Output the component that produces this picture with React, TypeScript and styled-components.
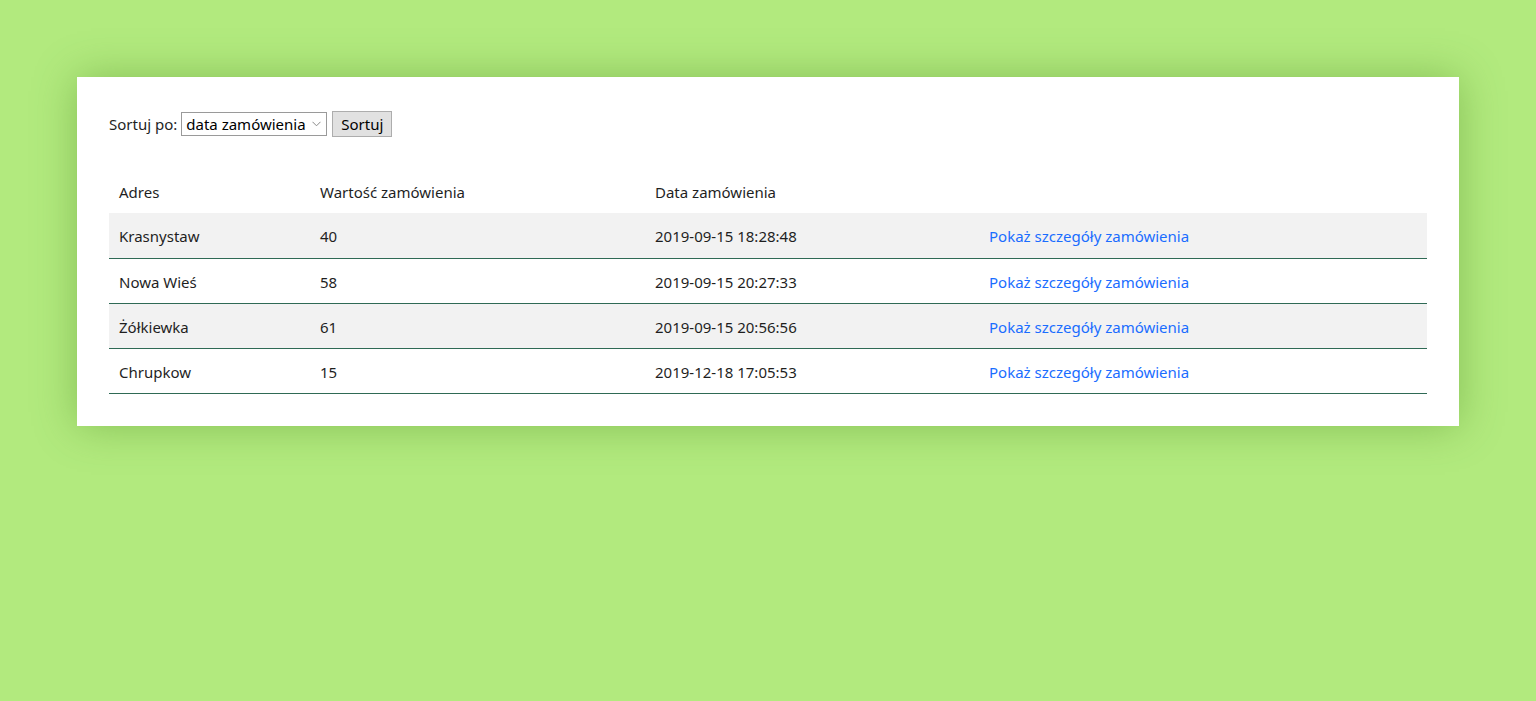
import React from "react";
import styled, { createGlobalStyle } from "styled-components";

const Global = createGlobalStyle`
  html, body { margin: 0; padding: 0; }
  body {
    background: #b2ea7e;
    font-family: "Noto Sans", "Open Sans", sans-serif;
    font-size: 15px;
    color: #1f1f1f;
    min-height: 701px;
  }
`;

const Page = styled.div`
  padding: 77px 77px;
`;

const Card = styled.div`
  background: #fff;
  padding: 32px;
  box-shadow: 0 0 40px rgba(80, 140, 40, 0.45);
`;

const SortBar = styled.form`
  display: flex;
  align-items: center;
  height: 26px;
  margin-top: 2px;
`;

const Label = styled.label`
  margin-right: 4px;
`;

const SelectWrap = styled.span`
  position: relative;
  display: inline-flex;
  margin-right: 5px;
`;

const Select = styled.select`
  appearance: none;
  -webkit-appearance: none;
  font-family: inherit;
  font-size: 15px;
  height: 24px;
  width: 146px;
  border: 1px solid #9a9a9a;
  border-radius: 0;
  background: #fff;
  color: #000;
  padding: 0 20px 0 4px;
  outline: none;
`;

const Chevron = styled.svg`
  position: absolute;
  right: 6px;
  top: 9px;
  pointer-events: none;
`;

const Button = styled.button`
  font-family: inherit;
  font-size: 15px;
  height: 26px;
  width: 60px;
  border: 1px solid #adadad;
  background: #e1e1e1;
  color: #000;
  padding: 0;
`;

const Table = styled.table`
  margin-top: 31px;
  width: 100%;
  border-collapse: collapse;
`;

const Th = styled.th<{ $w?: number }>`
  text-align: left;
  font-weight: normal;
  height: 45px;
  padding: 2px 10px 0;
  width: ${(p) => (p.$w ? `${p.$w}px` : "auto")};
  box-sizing: border-box;
`;

const Tr = styled.tr<{ $shade: boolean }>`
  background: ${(p) => (p.$shade ? "#f2f2f2" : "#fff")};
  border-bottom: 1px solid #2f6a55;
`;

const Td = styled.td`
  box-sizing: border-box;
  height: 45px;
  padding: 2px 10px 0;
`;

const Link = styled.a`
  color: #1a6dff;
  text-decoration: none;
  cursor: pointer;
`;

const rows = [
  { addr: "Krasnystaw", val: "40", date: "2019-09-15 18:28:48" },
  { addr: "Nowa Wieś", val: "58", date: "2019-09-15 20:27:33" },
  { addr: "Żółkiewka", val: "61", date: "2019-09-15 20:56:56" },
  { addr: "Chrupkow", val: "15", date: "2019-12-18 17:05:53" },
];

export default function App() {
  return (
    <>
      <Global />
      <Page>
        <Card>
          <SortBar onSubmit={(e) => e.preventDefault()}>
            <Label>Sortuj po:</Label>
            <SelectWrap>
              <Select defaultValue="data">
                <option value="data">data zamówienia</option>
                <option value="wartosc">wartość zamówienia</option>
                <option value="adres">adres</option>
              </Select>
              <Chevron width="9" height="6" viewBox="0 0 9 6">
                <path d="M0.5 0.8 L4.5 4.8 L8.5 0.8" fill="none" stroke="#8a8a8a" strokeWidth="1" />
              </Chevron>
            </SelectWrap>
            <Button type="submit">Sortuj</Button>
          </SortBar>
          <Table>
            <thead>
              <tr>
                <Th $w={201}>Adres</Th>
                <Th $w={335}>Wartość zamówienia</Th>
                <Th $w={334}>Data zamówienia</Th>
                <Th></Th>
              </tr>
            </thead>
            <tbody>
              {rows.map((r, i) => (
                <Tr key={i} $shade={i % 2 === 0}>
                  <Td>{r.addr}</Td>
                  <Td>{r.val}</Td>
                  <Td>{r.date}</Td>
                  <Td>
                    <Link>Pokaż szczegóły zamówienia</Link>
                  </Td>
                </Tr>
              ))}
            </tbody>
          </Table>
        </Card>
      </Page>
    </>
  );
}
